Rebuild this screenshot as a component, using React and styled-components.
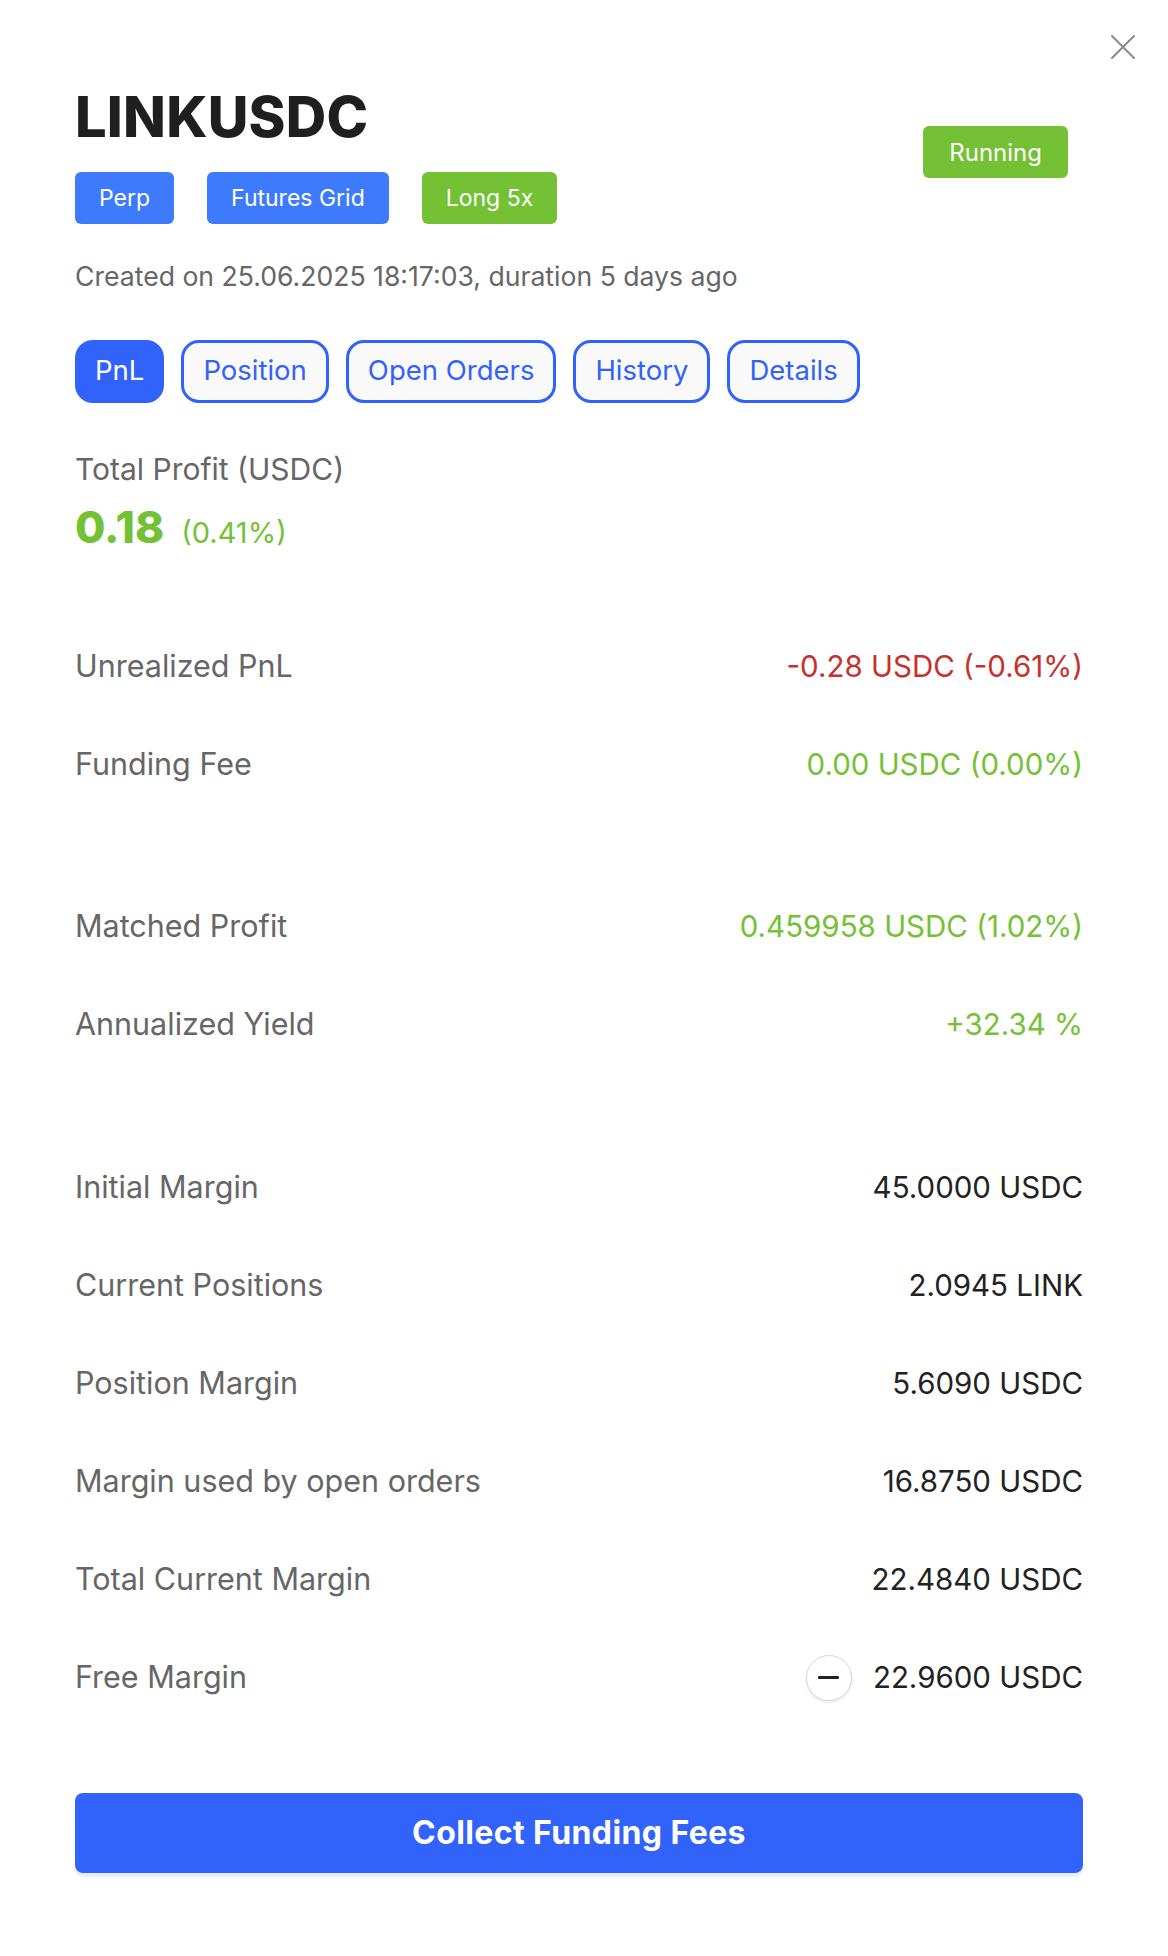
import React from "react";
import styled, { createGlobalStyle } from "styled-components";

const Global = createGlobalStyle`
  html, body { margin: 0; padding: 0; background: #ffffff; }
  body { font-family: "Inter", "Noto Sans", sans-serif; -webkit-font-smoothing: antialiased; }
  * { box-sizing: border-box; }
`;

const Page = styled.div`
  position: relative;
  width: 1168px;
  min-height: 1956px;
  padding: 89px 85px 0 75px;
  background: #fff;
`;

const Close = styled.button`
  position: absolute;
  top: 33px;
  right: 31px;
  width: 28px;
  height: 28px;
  padding: 0;
  border: 0;
  background: transparent;
  display: flex;
  align-items: center;
  justify-content: center;
  cursor: pointer;
`;

const Header = styled.header`
  display: flex;
  justify-content: space-between;
  align-items: flex-start;
`;

const HeadLeft = styled.div`
  display: flex;
  flex-direction: column;
  gap: 27px;
`;

const Title = styled.h1`
  margin: 0;
  font-size: 56px;
  line-height: 1;
  font-weight: 800;
  color: #1f1f1f;
  letter-spacing: 0.2px;
`;

const Tags = styled.div`
  display: flex;
  gap: 33px;
`;

const Tag = styled.span`
  display: inline-flex;
  align-items: center;
  justify-content: center;
  height: 52px;
  padding: 0 24px;
  border-radius: 6px;
  background: ${(p) => (p.$tone === "green" ? "#74c136" : "#3d7bfc")};
  color: #fff;
  font-size: 23px;
  font-weight: 400;
`;

const Status = styled(Tag)`
  margin-top: 37px;
  margin-right: 15px;
  padding: 0 26px;
  font-size: 24px;
  background: #74c136;
`;

const Created = styled.p`
  margin: 39px 0 0;
  font-size: 26.6px;
  line-height: 1;
  color: #666;
`;

const TabBar = styled.nav`
  display: flex;
  gap: 17px;
  margin-top: 50px;
`;

const Tab = styled.button`
  height: 63px;
  padding: 0 ${(p) => (p.$active ? 17 : 19)}px;
  border: 3px solid #3163fa;
  border-radius: 18px;
  background: ${(p) => (p.$active ? "#3163fa" : "#f9f9fa")};
  color: ${(p) => (p.$active ? "#fff" : "#3163fa")};
  font-family: inherit;
  font-size: 27.5px;
  line-height: 1;
  cursor: pointer;
`;

const ProfitLabel = styled.div`
  margin-top: 51px;
  font-size: 30px;
  line-height: 1;
  color: #666;
`;

const ProfitLine = styled.div`
  display: flex;
  align-items: baseline;
  gap: 17px;
  margin-top: 21px;
  color: #74c136;
`;

const ProfitValue = styled.span`
  font-size: 44px;
  line-height: 1;
  font-weight: 800;
`;

const ProfitPct = styled.span`
  font-size: 29px;
  line-height: 1;
`;

const Group = styled.section`
  display: flex;
  flex-direction: column;
  margin-top: ${(p) => p.$gap}px;
`;

const Row = styled.div`
  display: flex;
  align-items: center;
  justify-content: space-between;
  height: 98px;
`;

const Label = styled.span`
  font-size: 30.5px;
  line-height: 1;
  color: #666;
`;

const Value = styled.span`
  display: flex;
  align-items: center;
  gap: 21px;
  font-size: 29.5px;
  line-height: 1;
  color: ${(p) => (p.$tone === "green" ? "#74c136" : p.$tone === "red" ? "#c8302c" : "#222")};
`;

const MinusCircle = styled.button`
  width: 46px;
  height: 46px;
  padding: 0;
  border: 1.5px solid #d6d6d6;
  border-radius: 50%;
  background: #fff;
  box-shadow: 0 2px 3px rgba(0, 0, 0, 0.08);
  display: flex;
  align-items: center;
  justify-content: center;
  cursor: pointer;
  &::before {
    content: "";
    width: 21px;
    height: 3px;
    border-radius: 1px;
    background: #222;
  }
`;

const Primary = styled.button`
  margin-top: 66px;
  width: 100%;
  height: 80px;
  border: 0;
  border-radius: 8px;
  background: #3163fa;
  box-shadow: 0 4px 0 #e8f0ff;
  color: #fff;
  font-family: inherit;
  font-size: 32px;
  font-weight: 700;
  letter-spacing: 0.4px;
  cursor: pointer;
`;

const groups = [
  {
    gap: 69,
    rows: [
      ["Unrealized PnL", "-0.28 USDC (-0.61%)", "red"],
      ["Funding Fee", "0.00 USDC (0.00%)", "green"],
    ],
  },
  {
    gap: 64,
    rows: [
      ["Matched Profit", "0.459958 USDC (1.02%)", "green"],
      ["Annualized Yield", "+32.34 %", "green"],
    ],
  },
  {
    gap: 65,
    rows: [
      ["Initial Margin", "45.0000 USDC"],
      ["Current Positions", "2.0945 LINK"],
      ["Position Margin", "5.6090 USDC"],
      ["Margin used by open orders", "16.8750 USDC"],
      ["Total Current Margin", "22.4840 USDC"],
      ["Free Margin", "22.9600 USDC", null, true],
    ],
  },
];

const tabs = ["PnL", "Position", "Open Orders", "History", "Details"];

export default function App() {
  return (
    <>
      <Global />
      <Page>
        <Close aria-label="Close">
          <svg width="26" height="26" viewBox="0 0 26 26">
            <path d="M2 2 L24 24 M24 2 L2 24" stroke="#8a8a8a" strokeWidth="2" strokeLinecap="round" />
          </svg>
        </Close>
        <Header>
          <HeadLeft>
            <Title>LINKUSDC</Title>
            <Tags>
              <Tag>Perp</Tag>
              <Tag>Futures Grid</Tag>
              <Tag $tone="green">Long 5x</Tag>
            </Tags>
          </HeadLeft>
          <Status>Running</Status>
        </Header>
        <Created>Created on 25.06.2025 18:17:03, duration 5 days ago</Created>
        <TabBar>
          {tabs.map((t, i) => (
            <Tab key={t} $active={i === 0}>
              {t}
            </Tab>
          ))}
        </TabBar>
        <ProfitLabel>Total Profit (USDC)</ProfitLabel>
        <ProfitLine>
          <ProfitValue>0.18</ProfitValue>
          <ProfitPct>(0.41%)</ProfitPct>
        </ProfitLine>
        {groups.map((g, gi) => (
          <Group key={gi} $gap={g.gap}>
            {g.rows.map(([l, v, tone, action]) => (
              <Row key={l}>
                <Label>{l}</Label>
                <Value $tone={tone}>
                  {action && <MinusCircle aria-label="Decrease" />}
                  {v}
                </Value>
              </Row>
            ))}
          </Group>
        ))}
        <Primary>Collect Funding Fees</Primary>
      </Page>
    </>
  );
}
